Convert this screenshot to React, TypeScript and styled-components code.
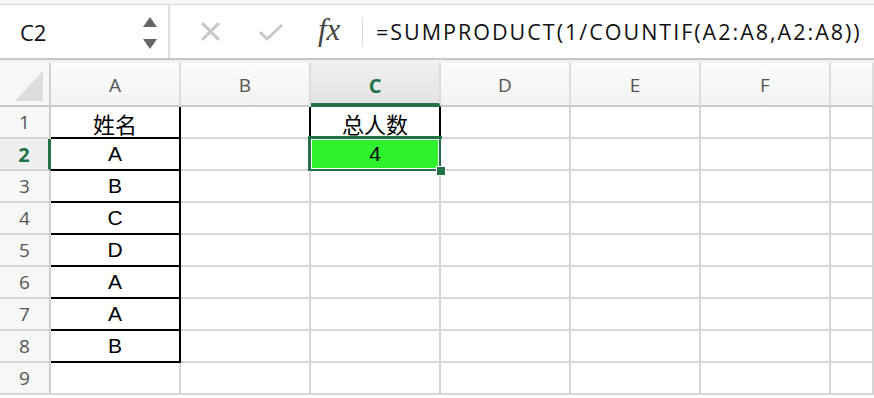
import React from "react";
import styled, { createGlobalStyle, css } from "styled-components";

const GlobalStyle = createGlobalStyle`
  html, body {
    margin: 0;
    padding: 0;
    background: #fff;
    overflow: hidden;
  }
  body {
    font-family: "Liberation Sans", Arial, sans-serif;
  }
`;

const GREEN = "#217346";
const GRID = "#d6d6d6";

const Page = styled.div`
  width: 874px;
  height: 398px;
  display: flex;
  flex-direction: column;
  overflow: hidden;
`;

const TopStrip = styled.div`
  height: 4px;
  border-bottom: 1px solid #dcdcdc;
  background: #f6f6f6;
`;

const Toolbar = styled.div`
  height: 53px;
  display: flex;
  align-items: stretch;
  border-bottom: 2px solid #c6c6c6;
  background: #fff;
`;

const NameBox = styled.div`
  width: 170px;
  border-right: 2px solid #dedede;
  display: flex;
  align-items: center;
  justify-content: space-between;
  padding: 0 11px 0 20px;
  box-sizing: border-box;
  font-family: "Open Sans", "Liberation Sans", sans-serif;
  font-size: 22px;
  color: #111;
`;

const Spinner = styled.div`
  display: flex;
  flex-direction: column;
  gap: 12px;
  padding-top: 2px;
`;

const Arrow = styled.div<{ $down?: boolean }>`
  width: 0;
  height: 0;
  border-left: 7px solid transparent;
  border-right: 7px solid transparent;
  ${p =>
    p.$down
      ? css`border-top: 10px solid #666;`
      : css`border-bottom: 10px solid #666;`}
`;

const FormulaArea = styled.div`
  flex: 1;
  display: flex;
  align-items: center;
  padding-left: 30px;
`;

const ToolIcon = styled.div`
  width: 58px;
  display: flex;
  align-items: center;
  justify-content: flex-start;
`;

const FxLabel = styled.span`
  font-family: "Liberation Serif", "DejaVu Serif", serif;
  font-style: italic;
  font-size: 31px;
  color: #444;
  width: 44px;
  margin-left: 2px;
  padding-bottom: 4px;
`;

const Divider = styled.div`
  width: 1px;
  height: 28px;
  background: #dadada;
  margin-right: 13px;
`;

const Formula = styled.div`
  font-family: "Open Sans", "Liberation Sans", sans-serif;
  font-size: 21.5px;
  letter-spacing: 2px;
  color: #111;
  white-space: nowrap;
  padding-bottom: 1px;
`;

const Gap = styled.div`
  height: 3px;
  background: #f1f1f1;
`;

const Sheet = styled.div`
  display: grid;
  grid-template-columns: 51px repeat(6, 130px) 1fr;
  grid-template-rows: 44px repeat(9, 32px);
`;

const HeaderCell = styled.div<{ $active?: boolean }>`
  box-sizing: border-box;
  display: flex;
  align-items: center;
  justify-content: center;
  font-family: "Open Sans", "Liberation Sans", sans-serif;
  font-size: 19px;
  color: #555;
  background: linear-gradient(#fbfbfb, #f3f3f3);
  border-right: 2px solid #dcdcdc;
  border-bottom: 2px solid #c9c9c9;
  padding-top: 2px;
  ${p =>
    p.$active &&
    css`
      background: linear-gradient(#efefef, #e3e3e3);
      color: ${GREEN};
      font-weight: 700;
      font-size: 20px;
      border-bottom: 4px solid ${GREEN};
      padding-top: 4px;
    `}
`;

const Corner = styled.div`
  box-sizing: border-box;
  background: #f7f7f7;
  border-right: 2px solid #d0d0d0;
  border-bottom: 2px solid #c9c9c9;
  display: flex;
  align-items: flex-end;
  justify-content: flex-end;
  padding: 0 6px 4px 0;
`;

const CornerTriangle = styled.div`
  width: 28px;
  height: 30px;
  background: #dddddd;
  clip-path: polygon(100% 0, 100% 100%, 0 100%);
`;

const RowHead = styled.div<{ $active?: boolean }>`
  box-sizing: border-box;
  display: flex;
  align-items: center;
  justify-content: center;
  font-family: "Open Sans", "Liberation Sans", sans-serif;
  font-size: 19px;
  color: #555;
  background: #f7f7f7;
  border-right: 2px solid #cfcfcf;
  border-bottom: 2px solid ${GRID};
  ${p =>
    p.$active &&
    css`
      color: ${GREEN};
      font-weight: 700;
      font-size: 20px;
      border-right: 3px solid ${GREEN};
      background: #efefef;
    `}
`;

const Cell = styled.div<{ $right?: string; $bottom?: string; $fill?: string; $selected?: boolean }>`
  box-sizing: border-box;
  position: relative;
  display: flex;
  align-items: center;
  justify-content: center;
  font-family: "Liberation Sans", "Noto Sans CJK SC", sans-serif;
  font-size: 21px;
  color: #000;
  background: ${p => p.$fill || "#fff"};
  border-right: 2px solid ${p => p.$right || GRID};
  border-bottom: 2px solid ${p => p.$bottom || GRID};
  ${p =>
    p.$selected &&
    css`
      &::after {
        content: "";
        position: absolute;
        left: -3px;
        top: -3px;
        right: -3px;
        bottom: -3px;
        border: 3px solid ${GREEN};
        box-shadow: inset 0 0 0 1px #fff;
        pointer-events: none;
      }
      &::before {
        content: "";
        position: absolute;
        right: -7px;
        bottom: -7px;
        width: 8px;
        height: 8px;
        background: ${GREEN};
        border: 1px solid #fff;
        z-index: 2;
      }
    `}
`;

const CjkText = styled.span`
  font-family: "Noto Sans CJK SC", sans-serif;
  font-size: 22px;
  line-height: 1;
  padding-top: 2px;
`;

type CellSpec = { text?: string; right?: string; bottom?: string; fill?: string; selected?: boolean; cjk?: boolean };

const columns = ["A", "B", "C", "D", "E", "F", ""];
const colA = ["姓名", "A", "B", "C", "D", "A", "A", "B"];

const buildRow = (r: number): CellSpec[] => {
  const row: CellSpec[] = columns.map(() => ({}));
  if (r <= 8) {
    row[0] = { text: colA[r - 1], right: "#000", bottom: "#000", cjk: r === 1 };
  }
  if (r === 1) {
    row[1] = { right: "#000" };
    row[2] = { text: "总人数", right: "#000", cjk: true };
  }
  if (r === 2) {
    row[2] = { text: "4", fill: "#2ef22e", selected: true };
  }
  return row;
};

const rows = Array.from({ length: 9 }, (_, i) => i + 1);

export default function App() {
  return (
    <Page>
      <GlobalStyle />
      <TopStrip />
      <Toolbar>
        <NameBox>
          C2
          <Spinner>
            <Arrow />
            <Arrow $down />
          </Spinner>
        </NameBox>
        <FormulaArea>
          <ToolIcon>
            <svg width="21" height="21" viewBox="0 0 20 20">
              <path d="M2 2 L18 18 M18 2 L2 18" stroke="#c9c9c9" strokeWidth="3" fill="none" />
            </svg>
          </ToolIcon>
          <ToolIcon>
            <svg width="26" height="20" viewBox="0 0 26 20">
              <path d="M2 10 L9 17 L24 3" stroke="#c9c9c9" strokeWidth="3" fill="none" />
            </svg>
          </ToolIcon>
          <FxLabel>fx</FxLabel>
          <Divider />
          <Formula>=SUMPRODUCT(1/COUNTIF(A2:A8,A2:A8))</Formula>
        </FormulaArea>
      </Toolbar>
      <Gap />
      <Sheet>
        <Corner>
          <CornerTriangle />
        </Corner>
        {columns.map((c, i) => (
          <HeaderCell key={i} $active={c === "C"}>
            {c}
          </HeaderCell>
        ))}
        {rows.map(r => (
          <React.Fragment key={r}>
            <RowHead $active={r === 2}>{r}</RowHead>
            {buildRow(r).map((cell, i) => (
              <Cell
                key={i}
                $right={cell.right}
                $bottom={cell.bottom}
                $fill={cell.fill}
                $selected={cell.selected}
              >
                {cell.cjk ? <CjkText>{cell.text}</CjkText> : cell.text}
              </Cell>
            ))}
          </React.Fragment>
        ))}
      </Sheet>
    </Page>
  );
}
